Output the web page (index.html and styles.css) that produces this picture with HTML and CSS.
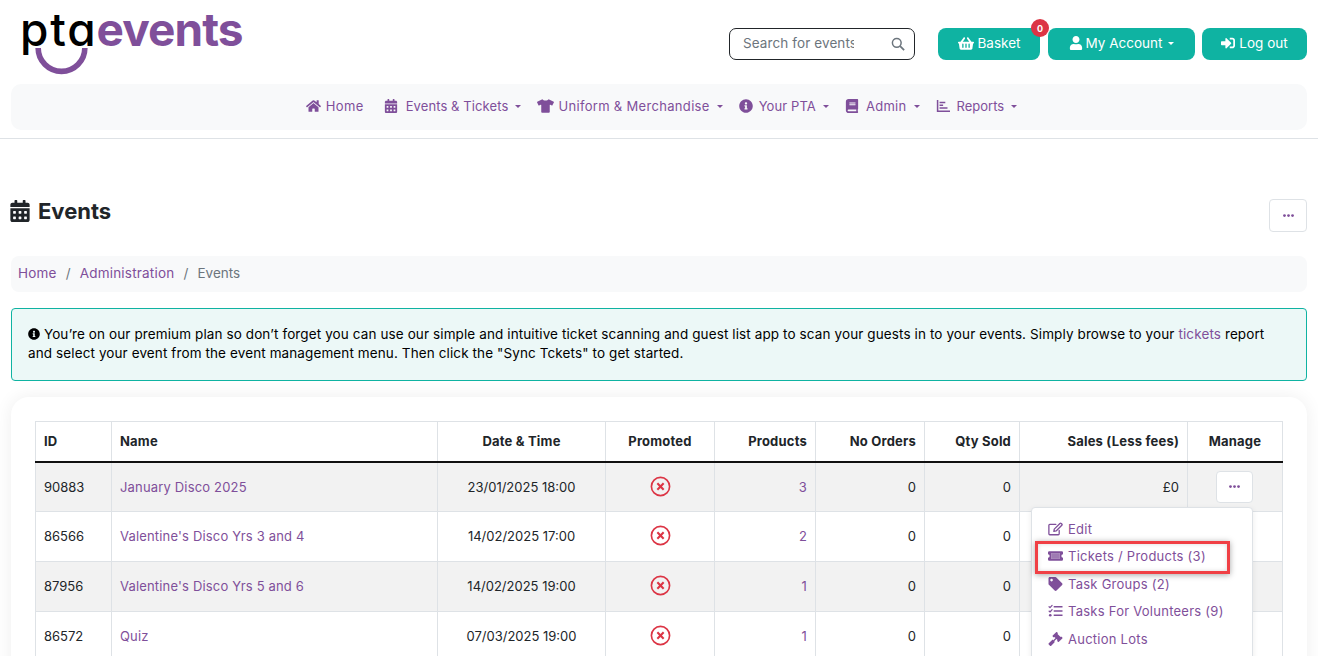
FILE: index.html
```html
<!DOCTYPE html>
<html lang="en">
<head>
<meta charset="utf-8">
<title>Events</title>
<link rel="stylesheet" href="styles.css">
</head>
<body>
<svg class="defs" width="0" height="0" aria-hidden="true">
<symbol id="i-home" viewBox="0 0 576 512"><path d="M280.37 148.26L96 300.11V464a16 16 0 0 0 16 16l112.06-.29a16 16 0 0 0 15.92-16V368a16 16 0 0 1 16-16h64a16 16 0 0 1 16 16v95.64a16 16 0 0 0 16 16.05L464 480a16 16 0 0 0 16-16V300L295.67 148.26a12.19 12.19 0 0 0-15.3 0zM571.6 251.47L488 182.56V44.05a12 12 0 0 0-12-12h-56a12 12 0 0 0-12 12v72.61L318.47 43a48 48 0 0 0-61 0L4.34 251.47a12 12 0 0 0-1.6 16.9l25.5 31A12 12 0 0 0 45.15 301l235.22-193.74a12.19 12.19 0 0 1 15.3 0L530.9 301a12 12 0 0 0 16.9-1.6l25.5-31a12 12 0 0 0-1.7-16.93z"/></symbol>
<symbol id="i-cal" viewBox="0 0 448 512"><path d="M0 464c0 26.5 21.5 48 48 48h352c26.5 0 48-21.5 48-48V192H0v272zm320-196c0-6.6 5.4-12 12-12h40c6.6 0 12 5.4 12 12v40c0 6.6-5.4 12-12 12h-40c-6.6 0-12-5.4-12-12v-40zm0 128c0-6.6 5.4-12 12-12h40c6.6 0 12 5.4 12 12v40c0 6.6-5.4 12-12 12h-40c-6.6 0-12-5.4-12-12v-40zM192 268c0-6.6 5.4-12 12-12h40c6.6 0 12 5.4 12 12v40c0 6.6-5.4 12-12 12h-40c-6.6 0-12-5.4-12-12v-40zm0 128c0-6.6 5.4-12 12-12h40c6.6 0 12 5.4 12 12v40c0 6.6-5.4 12-12 12h-40c-6.6 0-12-5.4-12-12v-40zM64 268c0-6.6 5.4-12 12-12h40c6.6 0 12 5.4 12 12v40c0 6.6-5.4 12-12 12H76c-6.6 0-12-5.4-12-12v-40zm0 128c0-6.6 5.4-12 12-12h40c6.6 0 12 5.4 12 12v40c0 6.6-5.4 12-12 12H76c-6.6 0-12-5.4-12-12v-40zM400 64h-48V16c0-8.8-7.2-16-16-16h-32c-8.8 0-16 7.2-16 16v48H160V16c0-8.8-7.2-16-16-16h-32c-8.8 0-16 7.2-16 16v48H48C21.5 64 0 85.5 0 112v48h448v-48c0-26.5-21.5-48-48-48z"/></symbol>
<symbol id="i-info" viewBox="0 0 512 512"><path d="M256 8C119.043 8 8 119.083 8 256c0 136.997 111.043 248 248 248s248-111.003 248-248C504 119.083 392.957 8 256 8zm0 110c23.196 0 42 18.804 42 42s-18.804 42-42 42-42-18.804-42-42 18.804-42 42-42zm56 254c0 6.627-5.373 12-12 12h-88c-6.627 0-12-5.373-12-12v-24c0-6.627 5.373-12 12-12h12v-64h-12c-6.627 0-12-5.373-12-12v-24c0-6.627 5.373-12 12-12h64c6.627 0 12 5.373 12 12v100h12c6.627 0 12 5.373 12 12v24z"/></symbol>
<symbol id="i-user" viewBox="0 0 448 512"><path d="M224 256c70.7 0 128-57.3 128-128S294.7 0 224 0 96 57.3 96 128s57.3 128 128 128zm89.6 32h-16.7c-22.2 10.2-46.9 16-72.9 16s-50.6-5.8-72.9-16h-16.7C60.2 288 0 348.2 0 422.4V464c0 26.5 21.5 48 48 48h352c26.5 0 48-21.5 48-48v-41.6c0-74.2-60.2-134.4-134.4-134.4z"/></symbol>
<symbol id="i-signin" viewBox="0 0 512 512"><path d="M416 448h-84c-6.6 0-12-5.4-12-12v-40c0-6.6 5.4-12 12-12h84c17.7 0 32-14.3 32-32V160c0-17.7-14.3-32-32-32h-84c-6.6 0-12-5.4-12-12V76c0-6.6 5.4-12 12-12h84c53 0 96 43 96 96v192c0 53-43 96-96 96zm-47-201L201 79c-15-15-41-4.5-41 17v96H24c-13.3 0-24 10.7-24 24v96c0 13.3 10.7 24 24 24h136v96c0 21.5 26 32 41 17l168-168c9.3-9.4 9.3-24.6 0-34z"/></symbol>
<symbol id="i-tag" viewBox="0 0 512 512"><path d="M0 252.118V48C0 21.49 21.49 0 48 0h204.118a48 48 0 0 1 33.941 14.059l211.882 211.882c18.745 18.745 18.745 49.137 0 67.882L293.823 497.941c-18.745 18.745-49.137 18.745-67.882 0L14.059 286.059A48 48 0 0 1 0 252.118zM112 64c-26.51 0-48 21.49-48 48s21.49 48 48 48 48-21.49 48-48-21.49-48-48-48z"/></symbol>
<symbol id="i-book" viewBox="0 0 448 512"><path d="M448 360V24c0-13.3-10.7-24-24-24H96C43 0 0 43 0 96v320c0 53 43 96 96 96h328c13.3 0 24-10.7 24-24v-16c0-7.5-3.5-14.3-8.9-18.7-4.2-15.4-4.2-59.3 0-74.7 5.4-4.3 8.9-11.1 8.9-18.6zM128 134c0-3.3 2.7-6 6-6h212c3.3 0 6 2.7 6 6v20c0 3.3-2.7 6-6 6H134c-3.3 0-6-2.7-6-6v-20zm0 64c0-3.3 2.7-6 6-6h212c3.3 0 6 2.7 6 6v20c0 3.3-2.7 6-6 6H134c-3.3 0-6-2.7-6-6v-20zm253.4 250H96c-17.7 0-32-14.3-32-32 0-17.6 14.4-32 32-32h285.4c-1.9 17.1-1.9 46.9 0 64z"/></symbol>
<symbol id="i-shirt" viewBox="0 0 640 512"><path d="M631.2 96.5L436.5 0C416.4 27.8 371.9 47.2 320 47.2S223.6 27.8 203.5 0L8.8 96.5c-7.9 4-11.1 13.6-7.2 21.5l57.2 114.5c4 7.9 13.6 11.1 21.5 7.2l56.6-27.7c10.6-5.2 23 2.5 23 14.4V480c0 17.7 14.3 32 32 32h256c17.7 0 32-14.3 32-32V226.3c0-11.8 12.4-19.6 23-14.4l56.6 27.7c7.9 4 17.5.8 21.5-7.2L638.3 118c4-7.9.8-17.6-7.1-21.5z"/></symbol>
<symbol id="i-basket" viewBox="0 0 576 512"><path d="M576 216v16c0 13.255-10.745 24-24 24h-8l-26.113 182.788C514.509 462.435 494.257 480 470.37 480H105.63c-23.887 0-44.139-17.565-47.518-41.212L32 256h-8c-13.255 0-24-10.745-24-24v-16c0-13.255 10.745-24 24-24h67.341l106.78-146.821c10.395-14.292 30.407-17.453 44.701-7.058 14.293 10.395 17.453 30.408 7.058 44.701L170.477 192h235.046L326.12 82.821c-10.395-14.292-7.234-34.306 7.059-44.701 14.291-10.395 34.306-7.235 44.701 7.058L484.659 192H552c13.255 0 24 10.745 24 24zM312 392V280c0-13.255-10.745-24-24-24s-24 10.745-24 24v112c0 13.255 10.745 24 24 24s24-10.745 24-24zm112 0V280c0-13.255-10.745-24-24-24s-24 10.745-24 24v112c0 13.255 10.745 24 24 24s24-10.745 24-24zm-224 0V280c0-13.255-10.745-24-24-24s-24 10.745-24 24v112c0 13.255 10.745 24 24 24s24-10.745 24-24z"/></symbol>
<symbol id="i-gavel" viewBox="0 0 512 512"><path d="M504.971 199.362l-22.627-22.627c-9.373-9.373-24.569-9.373-33.941 0l-5.657 5.657L329.608 69.255l5.657-5.657c9.373-9.373 9.373-24.569 0-33.941L312.638 7.029c-9.373-9.373-24.569-9.373-33.941 0L154.246 131.48c-9.373 9.373-9.373 24.569 0 33.941l22.627 22.627c9.373 9.373 24.569 9.373 33.941 0l5.657-5.657 39.598 39.598-81.04 81.04-5.657-5.657c-12.497-12.497-32.758-12.497-45.255 0L9.373 412.118c-12.497 12.497-12.497 32.758 0 45.255l45.255 45.255c12.497 12.497 32.758 12.497 45.255 0l114.745-114.745c12.497-12.497 12.497-32.758 0-45.255l-5.657-5.657 81.04-81.04 39.598 39.598-5.657 5.657c-9.373 9.373-9.373 24.569 0 33.941l22.627 22.627c9.373 9.373 24.569 9.373 33.941 0l124.451-124.451c9.372-9.372 9.372-24.568 0-33.941z"/></symbol>
<symbol id="i-dots" viewBox="0 0 512 512"><circle cx="68" cy="256" r="64"/><circle cx="256" cy="256" r="64"/><circle cx="444" cy="256" r="64"/></symbol>
<symbol id="i-chart" viewBox="0 0 512 512"><path d="M30 40h56v376h426v56H30zM130 100h210v52H130zM130 200h130v52H130zM130 300h290v52H130z"/></symbol>
<symbol id="i-edit" viewBox="0 0 576 512"><path fill="none" stroke="currentColor" stroke-width="50" stroke-linecap="round" stroke-linejoin="round" d="M430 310v130a36 36 0 0 1-36 36H70a36 36 0 0 1-36-36V116a36 36 0 0 1 36-36h230"/><path fill="none" stroke="currentColor" stroke-width="50" stroke-linejoin="round" d="M240 260l-14 86 86-14L530 114a34 34 0 0 0 0-48l-24-24a34 34 0 0 0-48 0z"/></symbol>
<symbol id="i-ticket" viewBox="0 0 576 512"><path fill-rule="evenodd" d="M48 72h480a48 48 0 0 1 48 48v72a64 64 0 0 0 0 128v72a48 48 0 0 1-48 48H48a48 48 0 0 1-48-48v-72a64 64 0 0 0 0-128v-72a48 48 0 0 1 48-48zM128 144v224h320V144z"/><path opacity=".75" d="M128 144h320v224H128z"/></symbol>
<symbol id="i-tasks" viewBox="0 0 512 512"><path d="M190 76h322v48H190zM190 232h322v48H190zM190 388h322v48H190z"/><path fill="none" stroke="currentColor" stroke-width="44" stroke-linecap="round" stroke-linejoin="round" d="M20 100l36 34 76-84M20 258l36 34 76-84"/><circle cx="64" cy="412" r="48"/></symbol>
<symbol id="i-x" viewBox="0 0 24 24"><circle cx="12" cy="12" r="10.4" fill="none" stroke="currentColor" stroke-width="1.9"/><path fill="none" stroke="currentColor" stroke-width="2.4" d="M8.4 8.4l7.2 7.2M15.6 8.4l-7.2 7.2"/></symbol>
</svg>

<div class="wrap">
  <header class="top">
    <a class="logo" href="#">
      <span class="logo-text"><span class="logo-pta">pta</span><span class="logo-events">events</span></span>
      <svg class="smile" viewBox="0 0 56 30"><path d="M3 0a25 25 0 0 0 50 0" fill="none" stroke="#7f4f9a" stroke-width="6"/></svg>
    </a>
    <div class="top-right">
      <form class="search">
        <input class="search-input" type="text" placeholder="Search for events">
        <svg class="search-icon" viewBox="0 0 16 16"><circle cx="6.6" cy="6.6" r="5" fill="none" stroke="currentColor" stroke-width="1.7"/><path d="M10.4 10.4l4.6 4.6" fill="none" stroke="currentColor" stroke-width="2"/></svg>
      </form>
      <div class="btns">
        <a class="btn basket" href="#"><svg class="ic ic-basket"><use href="#i-basket"/></svg> Basket<span class="badge">0</span></a>
        <a class="btn account" href="#"><svg class="ic"><use href="#i-user"/></svg> My Account<span class="caret"></span></a>
        <a class="btn logout" href="#"><svg class="ic"><use href="#i-signin"/></svg> Log out</a>
      </div>
    </div>
  </header>

  <nav class="nav">
    <a href="#" class="nav-home"><svg class="ic"><use href="#i-home"/></svg>Home</a>
    <a href="#" class="nav-events"><svg class="ic"><use href="#i-cal"/></svg>Events &amp; Tickets<span class="caret"></span></a>
    <a href="#" class="nav-shirt"><svg class="ic"><use href="#i-shirt"/></svg>Uniform &amp; Merchandise<span class="caret"></span></a>
    <a href="#" class="nav-pta"><svg class="ic"><use href="#i-info"/></svg>Your PTA<span class="caret"></span></a>
    <a href="#" class="nav-admin"><svg class="ic"><use href="#i-book"/></svg>Admin<span class="caret"></span></a>
    <a href="#" class="nav-reports"><svg class="ic"><use href="#i-chart"/></svg>Reports<span class="caret"></span></a>
  </nav>
</div>
<hr class="rule">
<main class="wrap">
  <div class="title-row">
    <h1 class="title"><svg class="ic title-ic"><use href="#i-cal"/></svg>Events</h1>
    <button class="more" type="button"><svg class="ic dots"><use href="#i-dots"/></svg></button>
  </div>
  <ol class="crumbs">
    <li><a href="#">Home</a></li>
    <li class="sep">/</li>
    <li><a href="#">Administration</a></li>
    <li class="sep">/</li>
    <li class="current">Events</li>
  </ol>
  <div class="alert">
    <svg class="ic alert-ic"><use href="#i-info"/></svg> You’re on our premium plan so don’t forget you can use our simple and intuitive ticket scanning and guest list app to scan your guests in to your events. Simply browse to your <a href="#">tickets</a> report and select your event from the event management menu. Then click the "Sync Tckets" to get started.
  </div>
  <section class="card">
    <table class="events">
      <colgroup>
        <col class="c-id"><col class="c-name"><col class="c-date"><col class="c-promo"><col class="c-prod"><col class="c-orders"><col class="c-qty"><col class="c-sales"><col class="c-manage">
      </colgroup>
      <thead>
        <tr><th>ID</th><th>Name</th><th class="mid">Date &amp; Time</th><th class="mid">Promoted</th><th class="num">Products</th><th class="num">No Orders</th><th class="num">Qty Sold</th><th class="num">Sales (Less fees)</th><th class="mid">Manage</th></tr>
      </thead>
      <tbody>
        <tr><td>90883</td><td><a href="#">January Disco 2025</a></td><td class="mid">23/01/2025 18:00</td><td class="mid"><svg class="cross"><use href="#i-x"/></svg></td><td class="num"><a href="#">3</a></td><td class="num">0</td><td class="num">0</td><td class="num">£0</td><td class="mid"><button class="more row-more" type="button"><svg class="ic dots"><use href="#i-dots"/></svg></button></td></tr>
        <tr><td>86566</td><td><a href="#">Valentine's Disco Yrs 3 and 4</a></td><td class="mid">14/02/2025 17:00</td><td class="mid"><svg class="cross"><use href="#i-x"/></svg></td><td class="num"><a href="#">2</a></td><td class="num">0</td><td class="num">0</td><td class="num">£0</td><td class="mid"><button class="more row-more" type="button"><svg class="ic dots"><use href="#i-dots"/></svg></button></td></tr>
        <tr><td>87956</td><td><a href="#">Valentine's Disco Yrs 5 and 6</a></td><td class="mid">14/02/2025 19:00</td><td class="mid"><svg class="cross"><use href="#i-x"/></svg></td><td class="num"><a href="#">1</a></td><td class="num">0</td><td class="num">0</td><td class="num">£0</td><td class="mid"><button class="more row-more" type="button"><svg class="ic dots"><use href="#i-dots"/></svg></button></td></tr>
        <tr><td>86572</td><td><a href="#">Quiz</a></td><td class="mid">07/03/2025 19:00</td><td class="mid"><svg class="cross"><use href="#i-x"/></svg></td><td class="num"><a href="#">1</a></td><td class="num">0</td><td class="num">0</td><td class="num">£0</td><td class="mid"><button class="more row-more" type="button"><svg class="ic dots"><use href="#i-dots"/></svg></button></td></tr>
      </tbody>
    </table>
    <ul class="menu">
      <li><a href="#"><svg class="ic"><use href="#i-edit"/></svg>Edit</a></li>
      <li><a href="#"><svg class="ic"><use href="#i-ticket"/></svg>Tickets / Products (3)</a></li>
      <li><a href="#"><svg class="ic"><use href="#i-tag"/></svg>Task Groups (2)</a></li>
      <li><a href="#"><svg class="ic"><use href="#i-tasks"/></svg>Tasks For Volunteers (9)</a></li>
      <li><a href="#"><svg class="ic"><use href="#i-gavel"/></svg>Auction Lots</a></li>
    </ul>
    <div class="callout"></div>
  </section>
</main>
</body>
</html>
```

FILE: styles.css
```css
* { box-sizing: border-box; }
html, body { margin: 0; height: 656px; overflow: hidden; background: #fff; }
body { font-family: Inter, "Liberation Sans", sans-serif; font-size: 13px; color: #212529; }
a { color: #7f4f9a; text-decoration: none; }
.defs { position: absolute; }
.wrap { padding: 0 11px; }
.ic { width: 14px; height: 14px; fill: currentColor; flex: none; }

/* header */
.top { display: flex; height: 84px; }
.logo { position: relative; display: block; width: 240px; height: 84px; margin-left: 9px; }
.logo-text { display: block; font-family: Inter, sans-serif; font-feature-settings: "cv11" 1; font-size: 46px; line-height: 58px; white-space: nowrap; }
.logo-pta { color: #000; font-weight: 500; letter-spacing: 1.8px; }
.logo-events { color: #7f4f9a; font-weight: 700; letter-spacing: -.9px; margin-left: -1px; }
.smile { position: absolute; left: 15px; top: 48px; width: 53px; height: 28px; overflow: visible; }
.top-right { margin-left: auto; display: flex; align-items: flex-start; padding-top: 28px; }
.search { display: flex; align-items: center; width: 186px; height: 32px; border: 1px solid #212529; border-radius: 7px; padding: 0 9px 2px 13px; margin-right: 23px; }
.search-input { width: 111px; border: 0; outline: 0; padding: 0; font: inherit; font-size: 13.5px; letter-spacing: .1px; color: #6c757d; background: transparent; }
.search-input::placeholder { color: #6c757d; opacity: 1; }
.search-icon { width: 14px; height: 14px; margin-left: auto; color: #6c757d; position: relative; top: 1px; }
.btns { display: flex; gap: 8px; }
.btn { position: relative; display: flex; align-items: center; justify-content: center; gap: 4px; height: 32px; padding-bottom: 2px; border-radius: 8px; background: #0fb3a2; color: #fff; font-size: 13.5px; }
.basket { width: 102px; }
.account { width: 147px; gap: 3px; }
.account .caret { margin-left: 3px; }
.logout { width: 105px; margin-left: -1px; }
.ic-basket { width: 16px; height: 15px; }
.badge { position: absolute; top: -9px; right: -9px; width: 18px; height: 18px; border-radius: 50%; background: #dc3545; color: #fff; font-size: 9px; font-weight: 700; display: flex; align-items: center; justify-content: center; }
.caret { display: inline-block; width: 0; height: 0; margin-left: 2px; border-top: 3.5px solid currentColor; border-left: 3px solid transparent; border-right: 3px solid transparent; }

/* nav */
.nav { display: flex; justify-content: center; align-items: center; height: 46px; padding: 0 0 2px 5px; background: #f8f9fa; border-radius: 10px; gap: 16px; }
.nav a { display: flex; align-items: center; font-size: 13px; letter-spacing: .1px; white-space: nowrap; }
.nav .ic { margin-right: 7px; }
.nav .caret { margin-left: 7px; }
.nav .nav-home { letter-spacing: .35px; margin-right: 4px; }
.nav-home .ic { width: 15px; }
.nav .nav-home .ic { margin-right: 5px; }
.nav .nav-events .ic { margin-right: 8px; }
.nav .nav-shirt { letter-spacing: .32px; }
.nav-shirt .ic { width: 17px; }
.nav .nav-shirt .ic { margin-right: 4px; }
.nav .nav-pta .ic { margin-right: 6px; }
.nav .nav-admin { letter-spacing: .3px; }
.nav .nav-reports { letter-spacing: 0; }

.rule { border: 0; border-top: 1px solid #dee2e6; margin: 8px 0 0; height: 0; }

/* title */
.title-row { display: flex; justify-content: space-between; align-items: center; height: 33px; margin-top: 60px; }
.title { display: flex; align-items: center; gap: 8px; margin: 0 0 0 -1px; padding-bottom: 10px; font-size: 22px; font-weight: 700; color: #212529; }
.title-ic { width: 20px; height: 22px; }
.more { display: flex; align-items: center; justify-content: center; width: 38px; height: 33px; padding: 0; background: #fff; border: 1px solid #dee2e6; border-radius: 4px; color: #7f4f9a; }
.dots { width: 11px; height: 11px; }

/* breadcrumb */
.crumbs { display: flex; align-items: center; gap: 9px; height: 36px; margin: 24px 0 0; padding: 0 7px 2px; list-style: none; background: #f8f9fa; border-radius: 8px; font-size: 13.5px; letter-spacing: .2px; }
.sep { color: #6c757d; }
.current { color: #6c757d; letter-spacing: 0; }

/* alert */
.alert { height: 73px; margin-top: 16px; padding: 16px; background: #ecf8f7; border: 1px solid #0fb3a2; border-radius: 4px; color: #000; font-size: 13.5px; letter-spacing: .11px; line-height: 19px; }
.alert-ic { width: 12px; height: 12px; vertical-align: -1px; }

/* card */
.card { position: relative; height: 300px; margin-top: 16px; padding: 24px; background: #fff; border-radius: 18px; box-shadow: 0 0 18px rgba(0, 0, 0, .07); }
.events { width: 1247px; table-layout: fixed; border-collapse: collapse; }
.c-id { width: 76px; } .c-name { width: 326px; } .c-date { width: 168px; } .c-promo { width: 109px; } .c-prod { width: 101px; }
.c-orders { width: 109px; } .c-qty { width: 95px; } .c-sales { width: 168px; } .c-manage { width: 95px; }
.events th, .events td { border: 1px solid #dee2e6; padding: 0 8px 1px; text-align: left; }
.events th { height: 40px; font-weight: 700; letter-spacing: .2px; color: #212529; border-bottom: 2px solid #111; }
.events td { height: 50px; }
.events tbody tr:first-child td { padding-bottom: 0; }
.events td a { letter-spacing: .17px; }
.events tbody tr:nth-child(odd) td { background: #f2f2f2; }
.events .mid { text-align: center; }
.events .num { text-align: right; }
.cross { display: block; width: 21px; height: 21px; margin: -1px auto 0; color: #dc3545; }
.row-more { width: 37px; height: 32px; margin: 0 auto; position: relative; left: -1px; }

/* dropdown */
.menu { position: absolute; left: 1020px; top: 110px; width: 222px; margin: 0; padding: 8px 0; list-style: none; background: #fff; border: 1px solid #dee2e6; border-radius: 4px; box-shadow: 0 2px 6px rgba(0, 0, 0, .08); }
.menu li { height: 27.5px; }
.menu a { display: flex; align-items: center; gap: 5px; height: 27.5px; padding: 0 15px 2px 16px; letter-spacing: .25px; white-space: nowrap; }
.menu .ic { width: 15px; }
.callout { position: absolute; left: 1024px; top: 144px; width: 195px; height: 33px; border: 3px solid #f04045; box-shadow: 0 1px 6px rgba(0, 0, 0, .35), inset 0 0 4px rgba(0, 0, 0, .15); }
```
